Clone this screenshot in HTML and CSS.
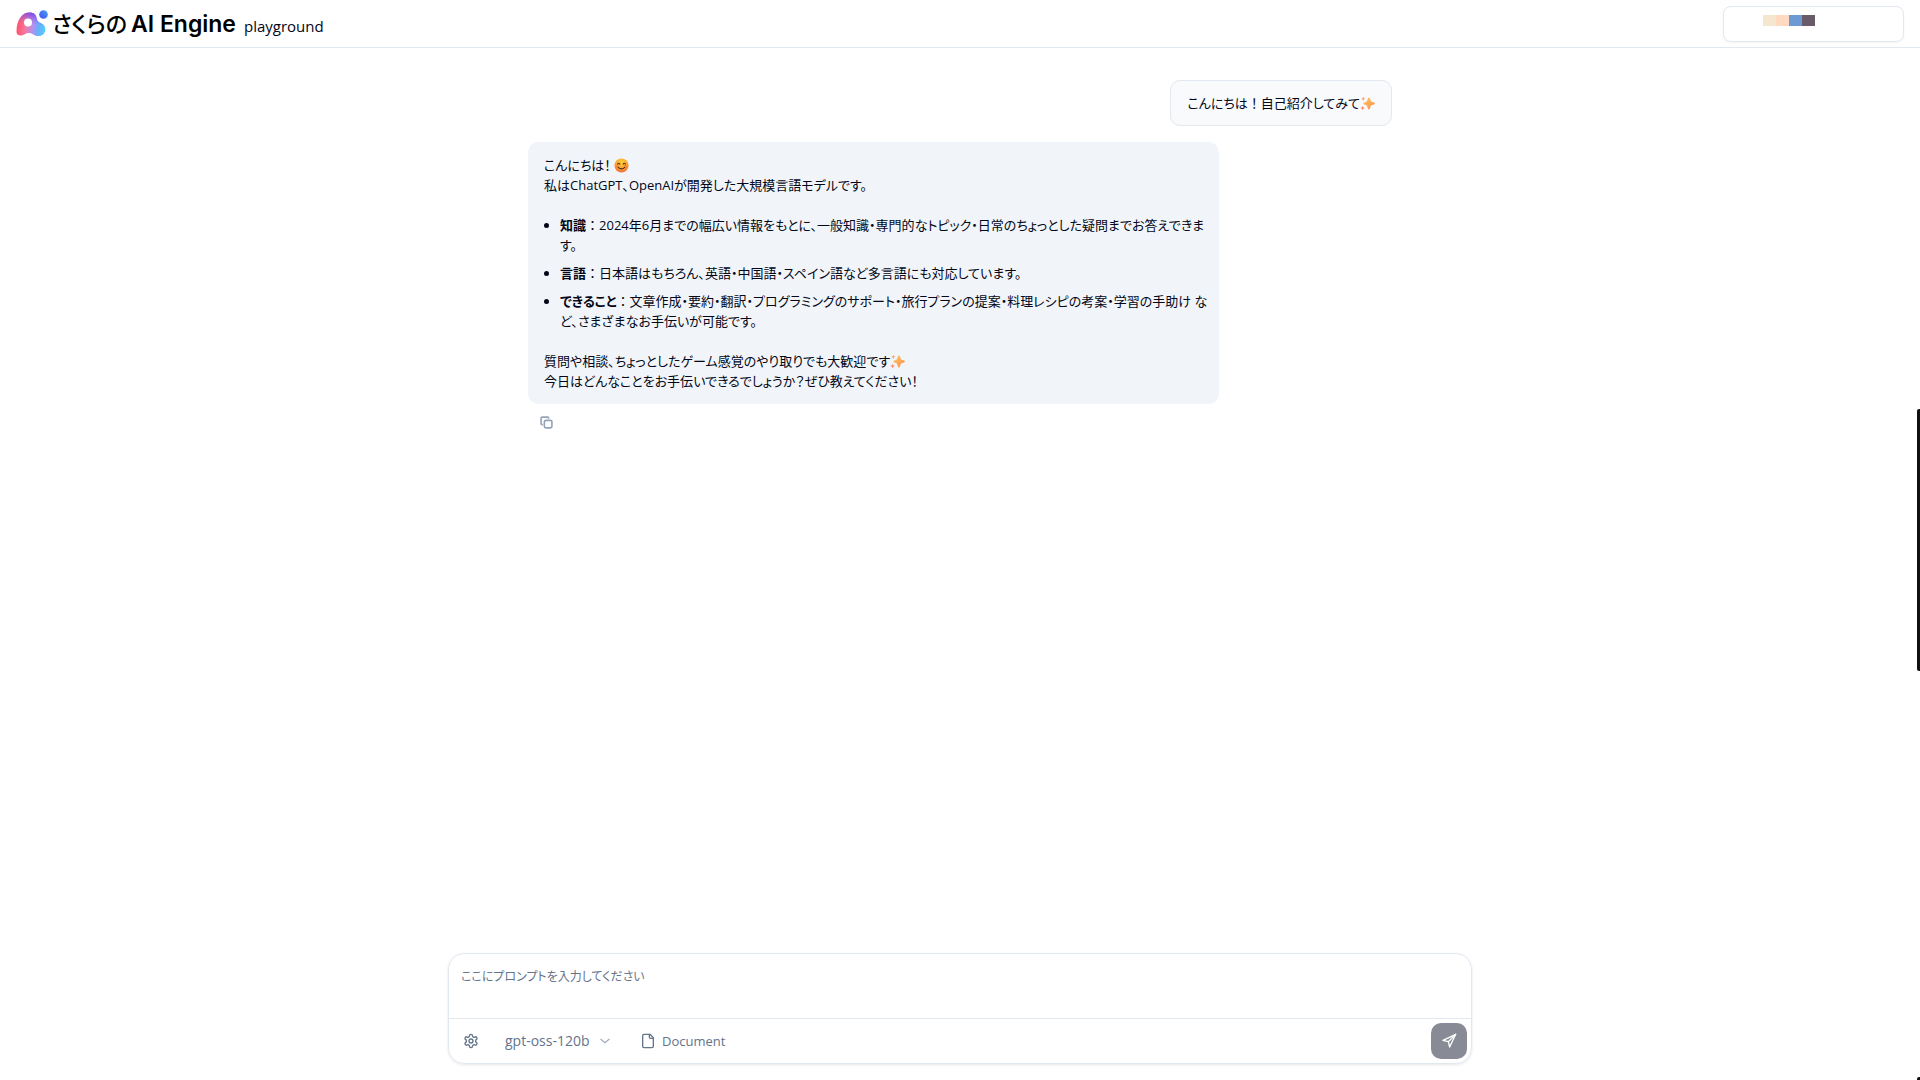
FILE: index.html
```html
<!DOCTYPE html>
<html lang="ja">
<head>
  <meta charset="UTF-8" />
  <meta name="viewport" content="width=device-width, initial-scale=1.0" />
  <title>さくらのAI Engine playground</title>
  <link rel="stylesheet" href="styles.css">
</head>
<body>

  <!-- shared emoji shapes -->
  <svg class="defs" width="0" height="0" aria-hidden="true">
    <defs>
      <linearGradient id="spark" x1="0" y1="0" x2="1" y2="1">
        <stop offset="0" stop-color="#ffca62" />
        <stop offset="1" stop-color="#ff8a4c" />
      </linearGradient>
      <radialGradient id="face" cx="0.5" cy="0.3" r="0.7">
        <stop offset="0" stop-color="#ffd03b" />
        <stop offset="0.6" stop-color="#fba52c" />
        <stop offset="1" stop-color="#ef6a3a" />
      </radialGradient>
      <symbol id="sparkles" viewBox="0 0 16 16">
        <path fill="url(#spark)" d="M9.5 1.5c.5 0 .8.3 1 .9l.9 2.7c.2.5.4.7.9.9l2.7.9c1.1.4 1.1 1.7 0 2.1l-2.7.9c-.5.2-.7.4-.9.9l-.9 2.7c-.4 1.2-1.6 1.2-2 0l-.9-2.7c-.2-.5-.4-.7-.9-.9l-2.2-.9c-1.1-.4-1.1-1.7 0-2.1l2.2-.9c.5-.2.7-.4.9-.9l.9-2.7c.2-.6.5-.9 1-.9z" />
        <path fill="#ffa15f" d="M3.5.8l.7 1.5 1.5.7-1.5.7-.7 1.5-.7-1.5L1.300 3l1.500-.7z" />
        <path fill="#ff8f72" d="M2.800 10.300l.8 1.700 1.700.8-1.700.8-.8 1.700-.8-1.700-1.700-.8 1.700-.8z" />
      </symbol>
      <symbol id="smile" viewBox="0 0 16 16">
        <circle cx="8" cy="8" r="7.500" fill="url(#face)" />
        <circle cx="3.800" cy="9" r="1.800" fill="#f4743b" opacity="0.6" />
        <circle cx="12.200" cy="9" r="1.800" fill="#f4743b" opacity="0.6" />
        <path fill="none" stroke="#56301f" stroke-width="1.100" stroke-linecap="round" d="M3.800 6.500q1.200-1.700 2.500 0M9.700 6.500q1.200-1.700 2.500 0M4.500 10q3.500 3.200 7 0" />
      </symbol>
    </defs>
  </svg>

  <header class="header">
    <h1 class="brand">
      <svg class="brand-mark" viewBox="0 0 32 28" aria-hidden="true">
        <defs>
          <linearGradient id="mark" x1="0" y1="0.6" x2="1" y2="0.7">
            <stop offset="0" stop-color="#ff5068" />
            <stop offset="0.3" stop-color="#f7789c" />
            <stop offset="0.55" stop-color="#b890f0" />
            <stop offset="0.75" stop-color="#6aaefa" />
            <stop offset="1" stop-color="#50d0fa" />
          </linearGradient>
          <linearGradient id="markTop" x1="0.6" y1="0" x2="0.4" y2="1">
            <stop offset="0" stop-color="#6a40e8" stop-opacity="0.9" />
            <stop offset="0.5" stop-color="#8a5cf0" stop-opacity="0" />
          </linearGradient>
          <linearGradient id="dot" x1="0" y1="1" x2="1" y2="0">
            <stop offset="0" stop-color="#4b50f2" />
            <stop offset="1" stop-color="#41a0fa" />
          </linearGradient>
        </defs>
        <path fill="url(#mark)" d="M.5 21.500C.5 10 6 2.500 13.500 2.500c4.500 0 6.500 2.200 7.200 5.500.8 3.500 2 4.200 4.600 5.200 2.600 1.100 4 3.300 4 6 0 4-3 6.800-6.500 6.800-3 0-4.200-.8-6-1.800-2.600-1.600-5.600-1.600-8 0C7.200 25 6 25.500 4.500 25.500 2 25.500.5 24 .5 21.500z" />
        <path fill="url(#markTop)" d="M.5 21.500C.5 10 6 2.500 13.500 2.500c4.500 0 6.500 2.200 7.200 5.500.8 3.500 2 4.200 4.600 5.200 2.600 1.100 4 3.300 4 6 0 4-3 6.800-6.500 6.800-3 0-4.200-.8-6-1.800-2.600-1.600-5.600-1.600-8 0C7.200 25 6 25.500 4.500 25.500 2 25.500.5 24 .5 21.500z" />
        <circle cx="12" cy="12.500" r="4" fill="#fff" />
        <circle cx="27.500" cy="4.500" r="4.300" fill="url(#dot)" />
      </svg>
      <span class="brand-name"><span class="brand-ja">さくらの</span>AI Engine</span>
    </h1>
    <span class="product">playground</span>
    <button class="account" type="button" aria-label="Account">
      <span class="swatch sand"></span>
      <span class="swatch peach"></span>
      <span class="swatch blue"></span>
      <span class="swatch plum"></span>
    </button>
  </header>

  <main class="chat">
    <div class="messages">
      <div class="message user">こんにちは<span class="wide">！</span>自己紹介してみて<svg class="emoji" aria-hidden="true"><use href="#sparkles" /></svg></div>

      <div class="message assistant">
        <p>こんにちは！ <svg class="emoji" aria-hidden="true"><use href="#smile" /></svg><br>私はChatGPT、OpenAIが開発した大規模言語モデルです。</p>
        <ul>
          <li><strong>知識</strong><span class="wide">：</span>2024年6月までの幅広い情報をもとに、一般知識・専門的なトピック・日常のちょっとした疑問までお答えできます。</li>
          <li><strong>言語</strong><span class="wide">：</span>日本語はもちろん、英語・中国語・スペイン語など多言語にも対応しています。</li>
          <li><strong>できること</strong><span class="wide">：</span>文章作成・要約・翻訳・プログラミングのサポート・旅行プランの提案・料理レシピの考案・学習の手助け など、さまざまなお手伝いが可能です。</li>
        </ul>
        <p>質問や相談、ちょっとしたゲーム感覚のやり取りでも大歓迎です<svg class="emoji" aria-hidden="true"><use href="#sparkles" /></svg><br>今日はどんなことをお手伝いできるでしょうか？ぜひ教えてください！</p>
      </div>

      <button class="copy" type="button" aria-label="Copy">
        <svg class="icon small" viewBox="0 0 24 24">
          <rect x="8" y="8" width="14" height="14" rx="3" />
          <path d="M4 16c-1.100 0-2-.9-2-2V4c0-1.100.9-2 2-2h10c1.100 0 2 .9 2 2" />
        </svg>
      </button>
    </div>
  </main>

  <form class="composer">
    <textarea class="prompt" aria-label="Prompt" placeholder="ここにプロンプトを入力してください"></textarea>
    <div class="toolbar">
      <button class="tool settings" type="button" aria-label="Settings">
        <svg class="icon" viewBox="0 0 24 24">
          <path d="M12.220 2h-.44a2 2 0 0 0-2 2v.18a2 2 0 0 1-1 1.730l-.43.25a2 2 0 0 1-2 0l-.15-.08a2 2 0 0 0-2.730.73l-.22.38a2 2 0 0 0 .73 2.730l.15.1a2 2 0 0 1 1 1.720v.51a2 2 0 0 1-1 1.740l-.15.09a2 2 0 0 0-.73 2.730l.22.38a2 2 0 0 0 2.730.73l.15-.08a2 2 0 0 1 2 0l.43.25a2 2 0 0 1 1 1.730V20a2 2 0 0 0 2 2h.44a2 2 0 0 0 2-2v-.18a2 2 0 0 1 1-1.730l.43-.25a2 2 0 0 1 2 0l.15.08a2 2 0 0 0 2.730-.73l.22-.39a2 2 0 0 0-.73-2.730l-.15-.08a2 2 0 0 1-1-1.740v-.5a2 2 0 0 1 1-1.740l.15-.09a2 2 0 0 0 .73-2.730l-.22-.38a2 2 0 0 0-2.730-.73l-.15.08a2 2 0 0 1-2 0l-.43-.25a2 2 0 0 1-1-1.730V4a2 2 0 0 0-2-2z" />
          <circle cx="12" cy="12" r="3" />
        </svg>
      </button>
      <div class="model">
        <select aria-label="Model">
          <option>gpt-oss-120b</option>
        </select>
        <svg class="icon chevron" viewBox="0 0 24 24"><path d="m5 9 7 6 7-6" /></svg>
      </div>
      <button class="tool" type="button">
        <svg class="icon" viewBox="0 0 24 24">
          <path d="M15 2H6a2 2 0 0 0-2 2v16a2 2 0 0 0 2 2h12a2 2 0 0 0 2-2V7z" />
          <path d="M14 2v4a2 2 0 0 0 2 2h4" />
        </svg>
        Document
      </button>
      <button class="send" type="submit" aria-label="Send">
        <svg class="icon" viewBox="0 0 24 24">
          <path d="m3 11 19-9-9 19-2-8z" />
          <path d="M22 2 11 13" />
        </svg>
      </button>
    </div>
  </form>

  <div class="scroll-thumb"></div>
  <div class="scroll-corner"></div>

</body>
</html>
```
FILE: styles.css
```css
* {
  box-sizing: border-box;
}

body {
  margin: 0;
  height: 100vh;
  display: flex;
  flex-direction: column;
  overflow: hidden;
  position: relative;
  background: #fff;
  color: #020617;
  font-family: "Open Sans", "Noto Sans CJK JP", sans-serif;
  font-size: 13px;
  line-height: 20px;
  font-feature-settings: "palt";
}

button, select, textarea {
  font: inherit;
  font-feature-settings: inherit;
  color: inherit;
}

button {
  border: none;
  background: none;
  padding: 0;
  cursor: pointer;
}

p, ul, h1 {
  margin: 0;
}

.defs {
  position: absolute;
}

.icon {
  width: 16px;
  height: 16px;
  fill: none;
  stroke: currentColor;
  stroke-width: 2;
  stroke-linecap: round;
  stroke-linejoin: round;
  flex-shrink: 0;
}

.icon.small {
  width: 13px;
  height: 13px;
  stroke-width: 3;
}

/* header */
.header {
  height: 48px;
  flex-shrink: 0;
  display: flex;
  align-items: center;
  padding: 0 16px;
  border-bottom: 1px solid #e2e8f0;
}

.brand {
  display: flex;
  align-items: center;
  gap: 4px;
}

.brand-mark {
  width: 32px;
  height: 28px;
}

.brand-name {
  font-family: Inter, "Noto Sans CJK JP", sans-serif;
  font-size: 23px;
  font-weight: 600;
  line-height: 28px;
  color: #000;
}

.brand-ja {
  margin-right: 4px;
  font-size: 22px;
  font-weight: 500;
}

.product {
  margin-left: 8px;
  padding-top: 4px;
  font-size: 15px;
}

.account {
  margin-left: auto;
  width: 181px;
  height: 36px;
  padding: 8px 39px;
  display: flex;
  align-items: flex-start;
  border: 1px solid #e2e8f0;
  border-radius: 8px;
  box-shadow: 0 1px 2px rgba(0, 0, 0, 0.05);
}

.swatch {
  width: 13px;
  height: 11px;
}

.sand { background: #f5e6d0; }
.peach { background: #ffd9c0; }
.blue { background: #6c9ad3; }
.plum { background: #695b69; }

/* conversation */
.chat {
  flex: 1;
  min-height: 0;
  padding: 32px 16px;
}

.messages {
  max-width: 864px;
  margin: 0 auto;
  display: flex;
  flex-direction: column;
  align-items: flex-start;
  gap: 16px;
}

.message {
  max-width: 80%;
  padding: 12px 16px;
  border-radius: 10px;
}

.user {
  align-self: flex-end;
  background: #f8fafc;
  border: 1px solid #e2e8f0;
}

.assistant {
  padding: 13px 16px;
  background: #f1f5f9;
}

.assistant ul {
  margin: 20px -8px 20px 0;
  padding-left: 16px;
  display: flex;
  flex-direction: column;
  gap: 8px;
}

.wide {
  font-feature-settings: normal;
}

.emoji {
  width: 15px;
  height: 15px;
  vertical-align: -3px;
}

.copy {
  margin: -4px 0 0 12px;
  height: 13px;
  display: flex;
  color: #94a3b8;
}

/* prompt box */
.composer {
  width: calc(100% - 32px);
  max-width: 1024px;
  margin: 0 auto 16px;
  border: 1px solid #e2e8f0;
  border-radius: 16px;
  box-shadow: 0 1px 3px rgba(15, 23, 42, 0.1);
}

.prompt {
  display: block;
  width: 100%;
  height: 64px;
  padding: 13px 12px;
  border: none;
  outline: none;
  resize: none;
  background: none;
  font-size: 12px;
}

.prompt::placeholder {
  color: #64748b;
}

.toolbar {
  display: flex;
  align-items: center;
  padding: 4px;
  border-top: 1px solid #e2e8f0;
  color: #64748b;
}

.tool {
  display: flex;
  align-items: center;
  gap: 6px;
}

.settings {
  padding: 0 10px;
}

.model {
  display: flex;
  align-items: center;
  margin: 0 28px 0 16px;
}

.model select {
  appearance: none;
  border: none;
  background: none;
  padding: 0 22px 0 0;
  outline: none;
  font-size: 14px;
}

.chevron {
  width: 14px;
  height: 14px;
  margin-left: -14px;
  opacity: 0.6;
  pointer-events: none;
}

.send {
  margin-left: auto;
  width: 36px;
  height: 36px;
  display: flex;
  align-items: center;
  justify-content: center;
  border-radius: 10px;
  background: #888a96;
  color: #fff;
}

/* overlay scrollbars */
.scroll-thumb {
  position: absolute;
  top: 409px;
  right: 0;
  width: 3px;
  height: 262px;
  border-radius: 2px 0 0 2px;
  background: #111;
}

.scroll-corner {
  position: absolute;
  right: 0;
  bottom: 0;
  width: 3px;
  height: 3px;
  border-radius: 2px 0 0 0;
  background: #111;
}
```
